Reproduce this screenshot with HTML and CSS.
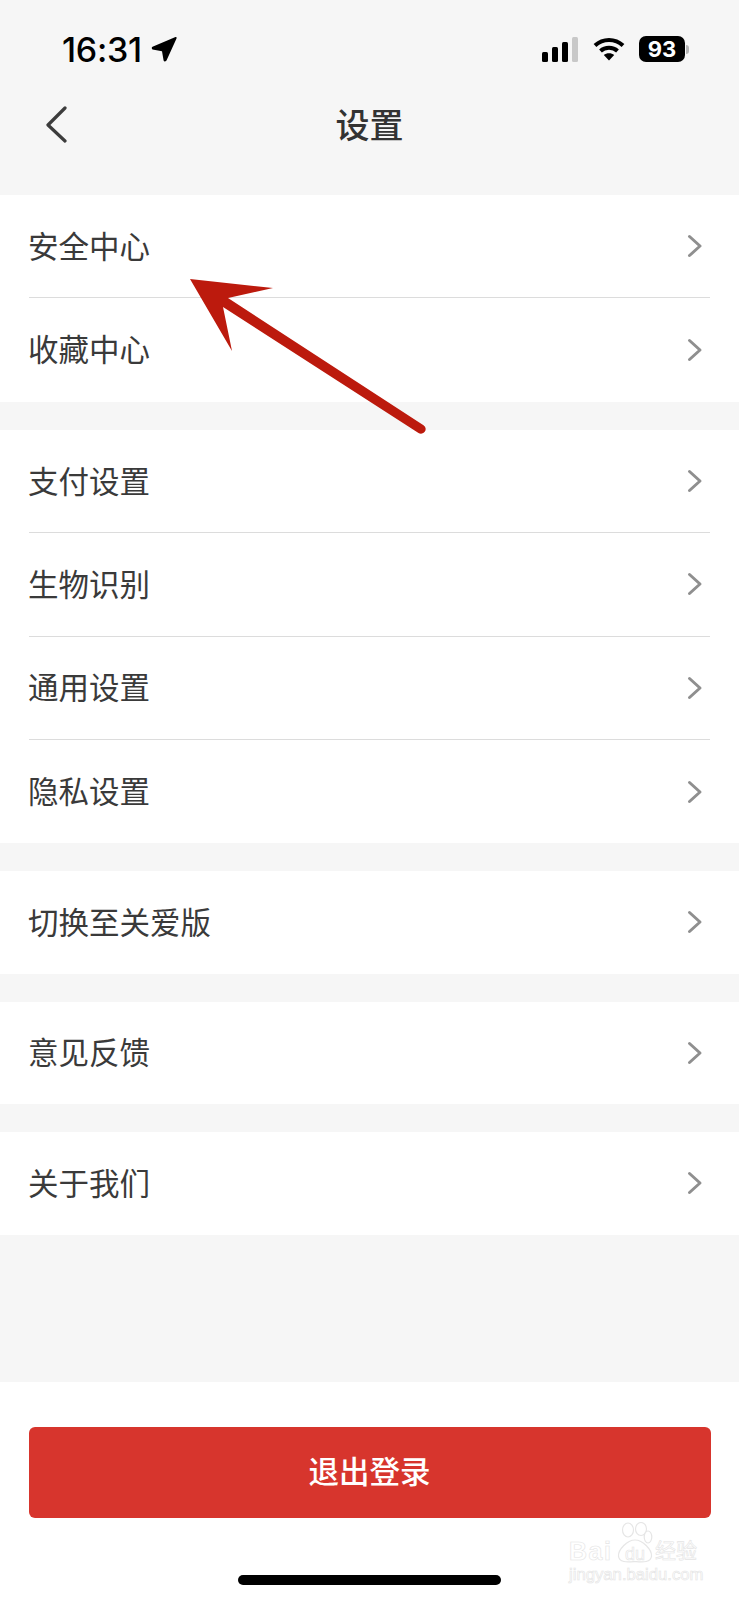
FILE: index.html
```html
<!DOCTYPE html>
<html lang="zh">
    <head>
        <title>设置</title>
        <meta charset="UTF-8">
        <meta name="viewport" content="width=device-width, initial-scale=1.0">
        <link rel="stylesheet" href="styles.css">
    </head>
    <body>
        <div class="page">
            <div class="statusBar">
                <div class="statusLeft">
                    <span class="time">16:31</span>
                    <svg class="locationIcon" width="26" height="26" viewBox="0 0 26 26"><path d="M24.500 1 Q26 0.600 25.500 2.500 L15.500 24.500 Q13.500 26.500 12.600 24.500 L11 15.200 L1.500 13.400 Q0 12 1.500 10.800 Z" fill="#000"/></svg>
                </div>
                <div class="statusRight">
                    <svg class="signalIcon" width="37" height="25" viewBox="0 0 37 25">
                        <rect x="0" y="15" width="6" height="10" rx="1.5" fill="#000"/>
                        <rect x="10" y="10" width="6" height="15" rx="1.5" fill="#000"/>
                        <rect x="20" y="5" width="6" height="20" rx="1.5" fill="#000"/>
                        <rect x="30" y="0" width="6" height="25" rx="1.5" fill="#c8c8c8"/>
                    </svg>
                    <svg class="wifiIcon" width="32" height="24" viewBox="0 0 32 24" fill="none" stroke="#000" stroke-width="4">
                        <path d="M2 8.500 C10 1 22 1 30 8.500"/>
                        <path d="M7.500 14 C12 9.800 20 9.800 24.500 14"/>
                        <path d="M16 23.500 L10.800 18 C13.500 15.600 18.500 15.600 21.200 18 Z" fill="#000" stroke="none"/>
                    </svg>
                    <div class="battery">
                        <span class="batteryBody">93</span>
                        <span class="batteryNub"></span>
                    </div>
                </div>
            </div>
            <div class="navBar">
                <svg class="backIcon" width="24" height="38" viewBox="0 0 24 38" fill="none" stroke="#3c3c3c" stroke-width="3.2" stroke-linecap="round" stroke-linejoin="round"><path d="M20 2 L3 19 L20 35"/></svg>
                <div class="navTitle">设置</div>
            </div>
            <div class="group firstGroup">
                <div class="row"><span>安全中心</span><svg class="chevron" width="16" height="24" viewBox="0 0 16 24"><path d="M2.500 2.500 L13 12 L2.500 21.500"/></svg></div>
                <div class="row"><span>收藏中心</span><svg class="chevron" width="16" height="24" viewBox="0 0 16 24"><path d="M2.500 2.500 L13 12 L2.500 21.500"/></svg></div>
            </div>
            <div class="group">
                <div class="row"><span>支付设置</span><svg class="chevron" width="16" height="24" viewBox="0 0 16 24"><path d="M2.500 2.500 L13 12 L2.500 21.500"/></svg></div>
                <div class="row"><span>生物识别</span><svg class="chevron" width="16" height="24" viewBox="0 0 16 24"><path d="M2.500 2.500 L13 12 L2.500 21.500"/></svg></div>
                <div class="row"><span>通用设置</span><svg class="chevron" width="16" height="24" viewBox="0 0 16 24"><path d="M2.500 2.500 L13 12 L2.500 21.500"/></svg></div>
                <div class="row"><span>隐私设置</span><svg class="chevron" width="16" height="24" viewBox="0 0 16 24"><path d="M2.500 2.500 L13 12 L2.500 21.500"/></svg></div>
            </div>
            <div class="group">
                <div class="row"><span>切换至关爱版</span><svg class="chevron" width="16" height="24" viewBox="0 0 16 24"><path d="M2.500 2.500 L13 12 L2.500 21.500"/></svg></div>
            </div>
            <div class="group">
                <div class="row"><span>意见反馈</span><svg class="chevron" width="16" height="24" viewBox="0 0 16 24"><path d="M2.500 2.500 L13 12 L2.500 21.500"/></svg></div>
            </div>
            <div class="group">
                <div class="row"><span>关于我们</span><svg class="chevron" width="16" height="24" viewBox="0 0 16 24"><path d="M2.500 2.500 L13 12 L2.500 21.500"/></svg></div>
            </div>
            <div class="footer">
                <div class="logoutButton">退出登录</div>
                <div class="homeBar"></div>
            </div>

            <!-- annotation drawn over the screenshot -->
            <svg class="pointerArrow" width="260" height="170" viewBox="0 0 260 170">
                <path d="M0 0 L83 9 L38 19 L233.500 146.200 A4.600 4.600 0 0 1 228.500 154 L33 28 L42 72 Z" fill="#bc1a0d"/>
            </svg>

            <div class="watermark">
                <svg class="paw" width="36" height="42" viewBox="0 0 36 42" fill="#fff" stroke="#e6e6e6" stroke-width="1.2">
                    <ellipse cx="11" cy="8" rx="5.500" ry="7"/>
                    <ellipse cx="24" cy="7" rx="5.500" ry="6.500"/>
                    <ellipse cx="31" cy="15" rx="3.800" ry="6"/>
                    <path d="M18 18 C26 18 35 28 34.500 34 C34 41 25 40 18 39.500 C11 40 2 41 1.500 34 C1 28 10 18 18 18 Z"/>
                </svg>
                <span class="wmBai">Bai</span>
                <span class="wmDu">du</span>
                <span class="wmCn">经验</span>
                <span class="wmUrl">jingyan.baidu.com</span>
            </div>
        </div>
    </body>
</html>
```

FILE: styles.css
```css
body{
    margin: 0;
    background-color: #f6f6f6;
    font-family: "Noto Sans CJK SC", "Noto Sans", sans-serif;
    color: #333;
}

.page{
    position: relative;
    display: flex;
    flex-direction: column;
    width: 739px;
    height: 1600px;
    overflow: hidden;
    background-color: #f6f6f6;
}

/* status bar */
.statusBar{
    display: flex;
    justify-content: space-between;
    align-items: center;
    height: 50px;
    padding: 24px 50px 16px 62px;
}
.statusLeft{
    display: flex;
    align-items: center;
    gap: 9px;
}
.time{
    font-family: Inter, "Liberation Sans", sans-serif;
    font-size: 34px;
    font-weight: 500;
    letter-spacing: -0.3px;
    color: #000;
}
.statusRight{
    display: flex;
    align-items: center;
}
.signalIcon{
    margin-right: 14px;
}
.wifiIcon{
    margin-right: 14px;
}
.battery{
    display: flex;
    align-items: center;
    gap: 1px;
}
.batteryBody{
    width: 46px;
    height: 26px;
    border-radius: 7px;
    background-color: #000;
    color: #fff;
    font-family: Inter, "Liberation Sans", sans-serif;
    font-size: 22px;
    font-weight: 700;
    line-height: 26px;
    text-align: center;
}
.batteryNub{
    width: 3px;
    height: 9px;
    border-radius: 0 3px 3px 0;
    background-color: #b5b5b5;
}

/* nav */
.navBar{
    position: relative;
    display: flex;
    align-items: center;
    justify-content: center;
    height: 105px;
}
.backIcon{
    position: absolute;
    left: 45px;
    top: 16px;
}
.navTitle{
    font-size: 34px;
    font-weight: 500;
    line-height: 72px;
    margin-bottom: 38px;
    color: #333;
}

/* list */
.group{
    background-color: #fff;
    padding-left: 29px;
    padding-right: 29px;
    margin-bottom: 28px;
}
.firstGroup{
    margin-bottom: 28.4px;
}
.row{
    display: flex;
    justify-content: space-between;
    align-items: center;
    height: 103.3px;
    box-sizing: border-box;
    border-bottom: 1px solid #dcdcdc;
    font-size: 30.5px;
    color: #3a3a3a;
}
.row:last-child{
    border-bottom: none;
}
.row:only-child{
    height: 102.5px;
}
.row span{
    margin-bottom: 3px;
    margin-left: -1px;
}
.chevron{
    margin-right: 7px;
    fill: none;
    stroke: #8f8f8f;
    stroke-width: 3;
    stroke-linecap: round;
    stroke-linejoin: round;
}

/* footer */
.footer{
    display: flex;
    flex-direction: column;
    align-items: center;
    margin-top: auto;
    height: 218px;
    background-color: #fff;
    padding-top: 45px;
    box-sizing: border-box;
}
.logoutButton{
    width: 682px;
    height: 91px;
    border-radius: 6px;
    background-color: #d7352d;
    color: #fff;
    font-size: 30.5px;
    font-weight: 500;
    line-height: 87px;
    text-align: center;
}
.homeBar{
    width: 263px;
    height: 10px;
    margin-top: 57px;
    border-radius: 5px;
    background-color: #000;
}

/* overlays */
.pointerArrow{
    position: absolute;
    left: 190px;
    top: 279px;
}
.watermark{
    position: absolute;
    left: 568px;
    top: 1520px;
    width: 135px;
    height: 66px;
    color: #fff;
    font-family: "Liberation Sans", sans-serif;
    -webkit-text-stroke: 0.6px #e4e4e4;
    white-space: nowrap;
}
.watermark span{
    position: absolute;
}
.paw{
    position: absolute;
    left: 49px;
    top: 2px;
}
.wmBai{
    left: 1px;
    top: 17px;
    font-size: 25px;
    font-weight: 700;
    letter-spacing: 1.5px;
}
.wmDu{
    left: 57px;
    top: 24px;
    font-size: 18px;
}
.wmCn{
    left: 87px;
    top: 15px;
    font-family: "Noto Sans CJK SC", sans-serif;
    font-size: 21px;
    line-height: 28px;
}
.wmUrl{
    left: 1px;
    top: 45px;
    font-size: 16.7px;
}
```
